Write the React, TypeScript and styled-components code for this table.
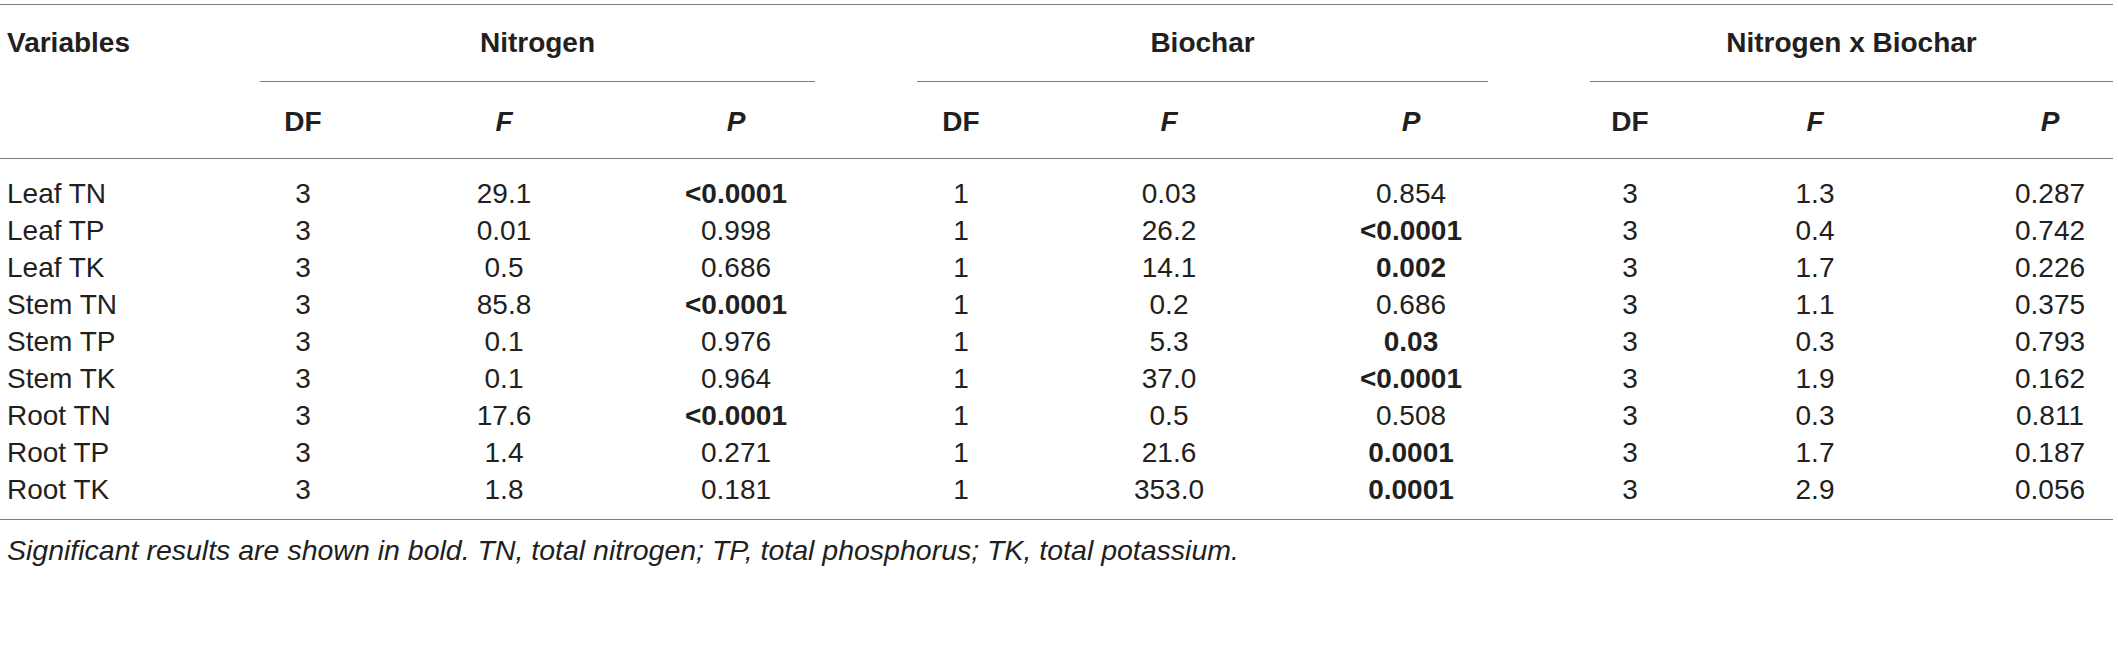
import React from "react";
import styled, { createGlobalStyle, css } from "styled-components";

/**
 * TYPES
 */
type Group = {
  title: string;
  ml: number;
  mr: number;
};

type RowData = {
  name: string;
  values: string[];
  bold: number[];
};

/**
 * DATA
 */
const GROUPS: Group[] = [
  { title: "Nitrogen", ml: 45, mr: 40 },
  { title: "Biochar", ml: 62, mr: 63 },
  { title: "Nitrogen x Biochar", ml: 39, mr: 0 },
];

const ROWS: RowData[] = [
  { name: "Leaf TN", values: ["3", "29.1", "<0.0001", "1", "0.03", "0.854", "3", "1.3", "0.287"], bold: [2] },
  { name: "Leaf TP", values: ["3", "0.01", "0.998", "1", "26.2", "<0.0001", "3", "0.4", "0.742"], bold: [5] },
  { name: "Leaf TK", values: ["3", "0.5", "0.686", "1", "14.1", "0.002", "3", "1.7", "0.226"], bold: [5] },
  { name: "Stem TN", values: ["3", "85.8", "<0.0001", "1", "0.2", "0.686", "3", "1.1", "0.375"], bold: [2] },
  { name: "Stem TP", values: ["3", "0.1", "0.976", "1", "5.3", "0.03", "3", "0.3", "0.793"], bold: [5] },
  { name: "Stem TK", values: ["3", "0.1", "0.964", "1", "37.0", "<0.0001", "3", "1.9", "0.162"], bold: [5] },
  { name: "Root TN", values: ["3", "17.6", "<0.0001", "1", "0.5", "0.508", "3", "0.3", "0.811"], bold: [2] },
  { name: "Root TP", values: ["3", "1.4", "0.271", "1", "21.6", "0.0001", "3", "1.7", "0.187"], bold: [5] },
  { name: "Root TK", values: ["3", "1.8", "0.181", "1", "353.0", "0.0001", "3", "2.9", "0.056"], bold: [5] },
];

const SUB_HEADS = [
  { label: "DF", italic: false },
  { label: "F", italic: true },
  { label: "P", italic: true },
];

/**
 * STYLES
 */
const GlobalStyle = createGlobalStyle`
  html, body {
    margin: 0;
    padding: 0;
    background: #ffffff;
  }
  body {
    font-family: "Liberation Sans", Arial, Helvetica, sans-serif;
    color: #231f20;
  }
`;

const columns = css`
  display: grid;
  grid-template-columns: 215px 176px 226px 238px 212px 204px 280px 158px 212px 192px;
`;

const StyledPage = styled.div`
  width: 2113px;
  padding-top: 4px;
`;

const StyledTable = styled.div`
  border-top: 1px solid #7d7d7d;
  border-bottom: 1px solid #7d7d7d;
`;

const StyledGroupRow = styled.div`
  ${columns};
  font-size: 28px;
  font-weight: 700;
  line-height: 32px;
`;

const StyledVarHead = styled.div`
  padding: 22px 0 0 7px;
`;

const StyledGroupHead = styled.div<{ $ml: number; $mr: number }>`
  grid-column: span 3;
  margin: 0 ${(p) => p.$mr}px 0 ${(p) => p.$ml}px;
  padding: 22px 0 22px 0;
  text-align: center;
  border-bottom: 1px solid #7d7d7d;
`;

const StyledSubRow = styled.div`
  ${columns};
  font-size: 28px;
  font-weight: 700;
  line-height: 32px;
  border-bottom: 1px solid #7d7d7d;
`;

const StyledSubHead = styled.div<{ $italic?: boolean; $last?: boolean }>`
  padding: 24px 0 20px ${(p) => (p.$last ? 66 : 0)}px;
  text-align: center;
  font-style: ${(p) => (p.$italic ? "italic" : "normal")};
`;

const StyledBody = styled.div`
  padding: 16px 0 11px 0;
`;

const StyledRow = styled.div`
  ${columns};
  font-size: 28px;
  line-height: 37px;
`;

const StyledName = styled.div`
  padding-left: 7px;
  white-space: nowrap;
`;

const StyledValue = styled.div<{ $bold?: boolean; $last?: boolean }>`
  padding-left: ${(p) => (p.$last ? 66 : 0)}px;
  text-align: center;
  font-weight: ${(p) => (p.$bold ? 700 : 400)};
`;

const StyledNote = styled.p`
  margin: 0;
  padding: 14px 0 0 7px;
  font-size: 28.5px;
  line-height: 32px;
  font-style: italic;
`;

/**
 * COMPONENT
 */
export const App = () => {
  return (
    <>
      <GlobalStyle />
      <StyledPage>
        <StyledTable>
          <StyledGroupRow>
            <StyledVarHead>Variables</StyledVarHead>
            {GROUPS.map((g) => (
              <StyledGroupHead key={g.title} $ml={g.ml} $mr={g.mr}>
                {g.title}
              </StyledGroupHead>
            ))}
          </StyledGroupRow>

          <StyledSubRow>
            <div />
            {GROUPS.map((g, gi) =>
              SUB_HEADS.map((s, si) => (
                <StyledSubHead
                  key={g.title + s.label}
                  $italic={s.italic}
                  $last={gi === 2 && si === 2}
                >
                  {s.label}
                </StyledSubHead>
              ))
            )}
          </StyledSubRow>

          <StyledBody>
            {ROWS.map((row) => (
              <StyledRow key={row.name}>
                <StyledName>{row.name}</StyledName>
                {row.values.map((v, i) => (
                  <StyledValue
                    key={i}
                    $bold={row.bold.includes(i)}
                    $last={i === row.values.length - 1}
                  >
                    {v}
                  </StyledValue>
                ))}
              </StyledRow>
            ))}
          </StyledBody>
        </StyledTable>

        <StyledNote>
          Significant results are shown in bold. TN, total nitrogen; TP, total phosphorus; TK, total potassium.
        </StyledNote>
      </StyledPage>
    </>
  );
};

export default App;
